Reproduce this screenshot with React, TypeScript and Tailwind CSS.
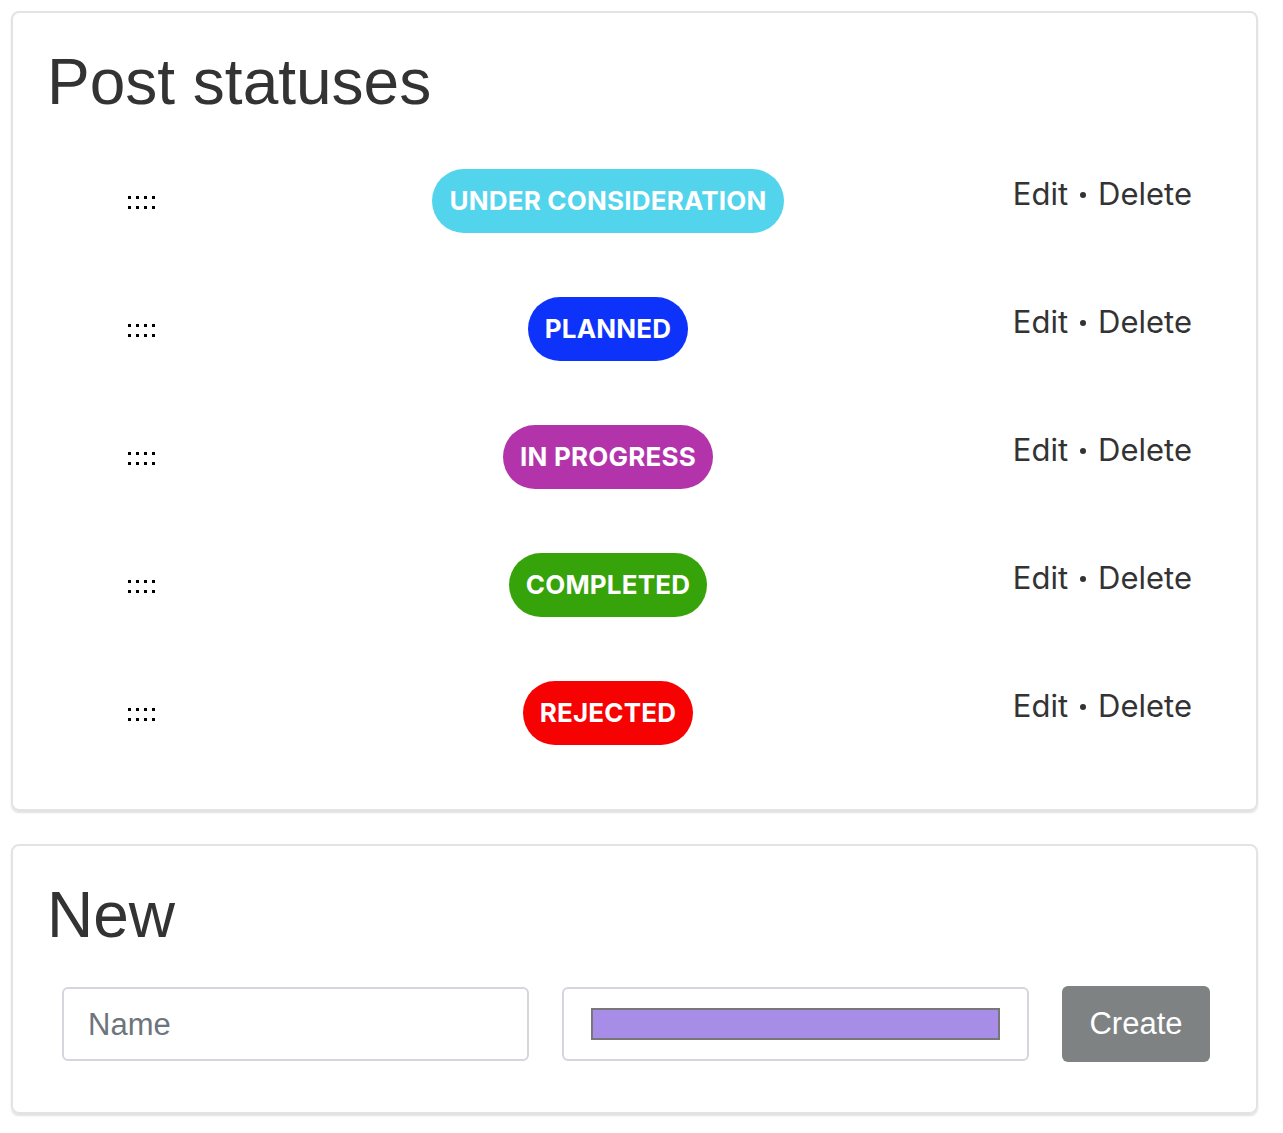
const statuses = [
  { name: "UNDER CONSIDERATION", color: "bg-[#52d4ec]" },
  { name: "PLANNED", color: "bg-[#0d33fb]" },
  { name: "IN PROGRESS", color: "bg-[#b334aa]" },
  { name: "COMPLETED", color: "bg-[#37a30a]" },
  { name: "REJECTED", color: "bg-[#f70202]" },
];

function DragHandle() {
  return (
    <div className="grid grid-cols-4 gap-x-[5px] gap-y-[7px]">
      {Array.from({ length: 8 }).map((_, i) => (
        <span key={i} className="block h-[3px] w-[3px] bg-black" />
      ))}
    </div>
  );
}

export default function App() {
  return (
    <main className="min-h-screen bg-white py-[11px] pl-[11px] pr-[25px] font-['Inter',sans-serif] text-[#333333]">
      <section className="rounded-lg border-2 border-[#e3e3e3] px-[34px] pb-[32px] pt-[31px] shadow-[0_2px_2px_rgba(0,0,0,0.12)]">
        <h1 className="font-['Liberation_Sans',Arial,sans-serif] text-[64px] leading-[1.2]">
          Post statuses
        </h1>
        <div className="mt-[16px]">
          {statuses.map((status) => (
            <div
              key={status.name}
              className="grid h-[128px] grid-cols-[188px_746px_1fr] items-center"
            >
              <div className="flex justify-center pt-[4px]">
                <DragHandle />
              </div>
              <div className="flex justify-center">
                <span
                  className={`flex h-[64px] items-center rounded-full px-[17px] text-[26px] font-bold tracking-[0.2px] text-white ${status.color}`}
                >
                  {status.name}
                </span>
              </div>
              <div className="mb-[14px] flex items-center justify-end gap-[12px] pr-[30px] text-[31px]">
                <span>Edit</span>
                <span className="mt-[2px] h-[6px] w-[6px] rounded-full bg-[#333333]" />
                <span>Delete</span>
              </div>
            </div>
          ))}
        </div>
      </section>

      <section className="mt-[33px] rounded-lg border-2 border-[#e3e3e3] px-[34px] pb-[49px] pt-[31px] shadow-[0_2px_2px_rgba(0,0,0,0.12)]">
        <h2 className="font-['Liberation_Sans',Arial,sans-serif] text-[64px] leading-[1.2]">
          New
        </h2>
        <div className="ml-[15px] mt-[33px] flex gap-[33px] font-['Liberation_Sans',Arial,sans-serif]">
          <input
            placeholder="Name"
            className="h-[74px] w-[467px] rounded-md border-2 border-[#d3d7dc] px-[24px] pt-[2px] text-[31px] text-[#495057] outline-none placeholder:text-[#6c757d]"
          />
          <div className="flex h-[74px] w-[467px] items-center rounded-md border-2 border-[#d3d7dc] px-[27px]">
            <div className="h-[32px] w-full border-2 border-[#777777] bg-[#a78de8]" />
          </div>
          <button className="h-[76px] w-[148px] -translate-y-[1px] rounded-md bg-[#7e8283] pt-[2px] text-[31px] text-white">
            Create
          </button>
        </div>
      </section>
    </main>
  );
}
